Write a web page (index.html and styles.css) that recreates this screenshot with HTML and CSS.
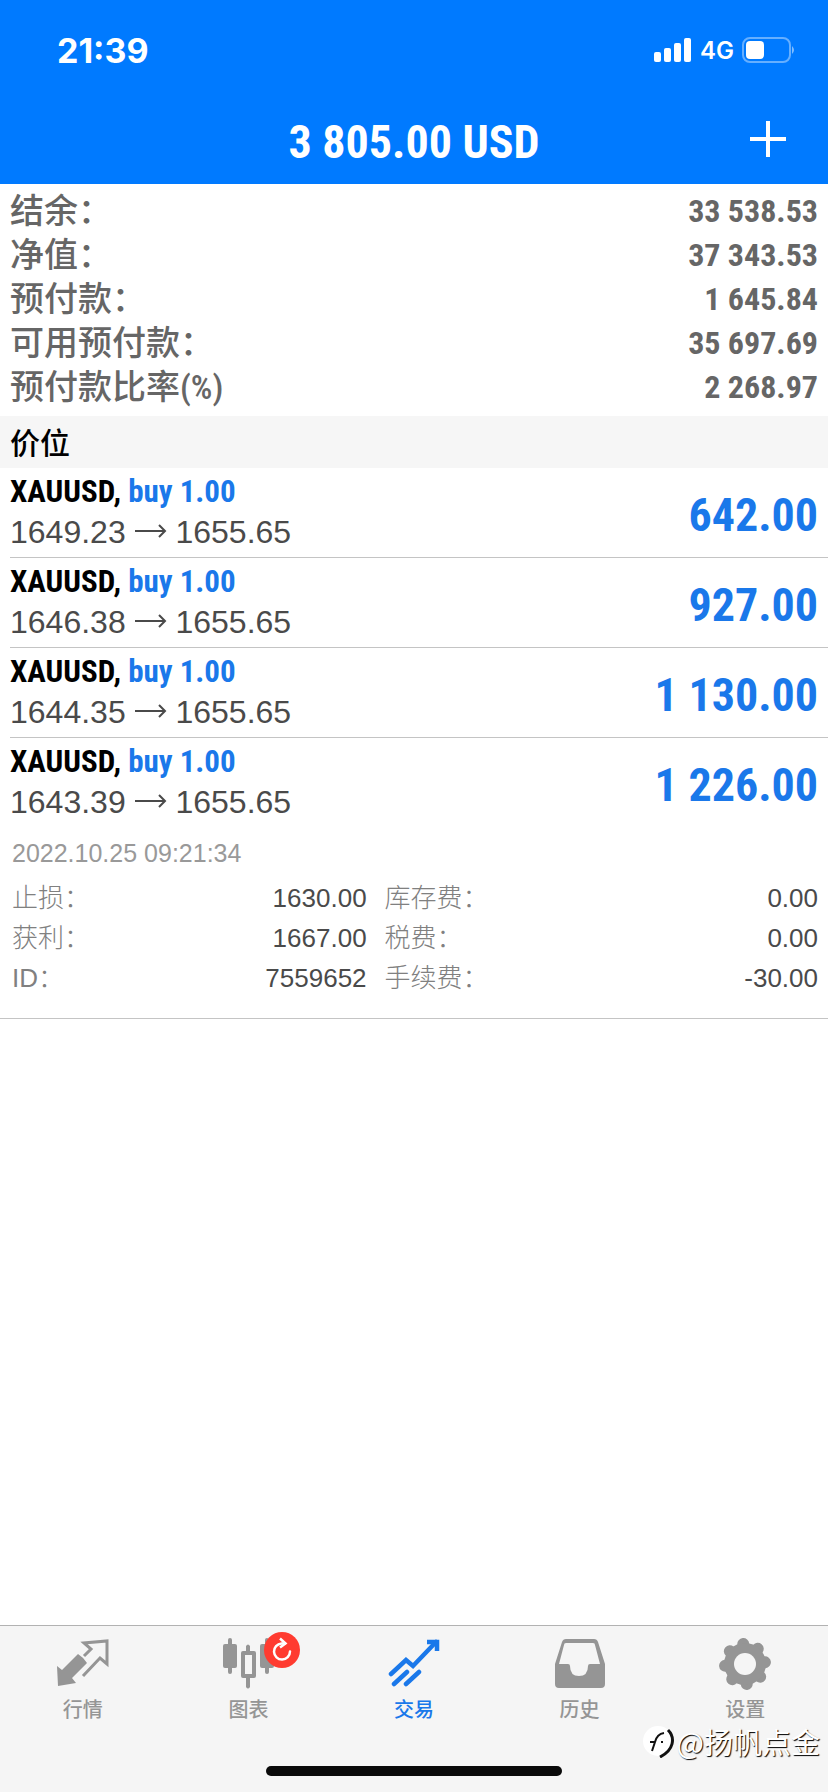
FILE: index.html
```html
<!DOCTYPE html>
<html lang="zh-Hans">
<head>
    <meta charset="UTF-8">
    <meta name="viewport" content="width=device-width, initial-scale=1">
    <title>交易</title>
    <link rel="stylesheet" href="styles.css">
</head>
<body>

<svg width="0" height="0" class="sprite" aria-hidden="true">
    <symbol id="arrow" viewBox="0 0 32 16">
        <path d="M0 8h30M24 2l6 6-6 6" fill="none" stroke="currentColor" stroke-width="2"/>
    </symbol>
</svg>

<header class="header">
    <div class="status-bar">
        <span class="clock">21:39</span>
        <div class="status-icons">
            <svg width="38" height="24" viewBox="0 0 38 24" fill="#fff" aria-hidden="true">
                <rect x="0" y="14" width="7" height="10" rx="2"/>
                <rect x="10" y="10" width="7" height="14" rx="2"/>
                <rect x="20" y="5" width="7" height="19" rx="2"/>
                <rect x="30" y="0" width="7" height="24" rx="2"/>
            </svg>
            <span class="network">4G</span>
            <svg width="54" height="26" viewBox="0 0 54 26" aria-hidden="true">
                <rect x="1" y="1" width="47" height="24" rx="7" fill="none" stroke="#fff" stroke-opacity=".4" stroke-width="2"/>
                <rect x="4" y="4" width="18" height="18" rx="4" fill="#fff"/>
                <path d="M50 9q4 4 0 8z" fill="#fff" fill-opacity=".5"/>
            </svg>
        </div>
    </div>
    <div class="title-bar">
        <h1>3 805.00 USD</h1>
        <button class="add-button" aria-label="新订单">
            <svg width="36" height="36" viewBox="0 0 36 36" stroke="#fff" stroke-width="4" aria-hidden="true">
                <path d="M18 0v36M0 18h36"/>
            </svg>
        </button>
    </div>
</header>

<main>
    <dl class="summary">
        <div><dt>结余：</dt><dd>33 538.53</dd></div>
        <div><dt>净值：</dt><dd>37 343.53</dd></div>
        <div><dt>预付款：</dt><dd>1 645.84</dd></div>
        <div><dt>可用预付款：</dt><dd>35 697.69</dd></div>
        <div><dt>预付款比率(%)</dt><dd>2 268.97</dd></div>
    </dl>

    <h2 class="section-title">价位</h2>

    <ul class="positions">
        <li class="position">
            <div>
                <p class="symbol">XAUUSD, <span class="side">buy 1.00</span></p>
                <p class="prices">1649.23 <svg class="arrow" role="img" aria-label="→"><use href="#arrow"/></svg> 1655.65</p>
            </div>
            <strong class="profit">642.00</strong>
        </li>
        <li class="position">
            <div>
                <p class="symbol">XAUUSD, <span class="side">buy 1.00</span></p>
                <p class="prices">1646.38 <svg class="arrow" role="img" aria-label="→"><use href="#arrow"/></svg> 1655.65</p>
            </div>
            <strong class="profit">927.00</strong>
        </li>
        <li class="position">
            <div>
                <p class="symbol">XAUUSD, <span class="side">buy 1.00</span></p>
                <p class="prices">1644.35 <svg class="arrow" role="img" aria-label="→"><use href="#arrow"/></svg> 1655.65</p>
            </div>
            <strong class="profit">1 130.00</strong>
        </li>
        <li class="position">
            <div>
                <p class="symbol">XAUUSD, <span class="side">buy 1.00</span></p>
                <p class="prices">1643.39 <svg class="arrow" role="img" aria-label="→"><use href="#arrow"/></svg> 1655.65</p>
            </div>
            <strong class="profit">1 226.00</strong>
        </li>
    </ul>

    <!-- 展开的持仓详情 -->
    <section class="details">
        <time datetime="2022-10-25T09:21:34">2022.10.25 09:21:34</time>
        <dl class="details-grid">
            <div><dt>止损：</dt><dd>1630.00</dd></div>
            <div><dt>库存费：</dt><dd>0.00</dd></div>
            <div><dt>获利：</dt><dd>1667.00</dd></div>
            <div><dt>税费：</dt><dd>0.00</dd></div>
            <div><dt>ID：</dt><dd>7559652</dd></div>
            <div><dt>手续费：</dt><dd>-30.00</dd></div>
        </dl>
    </section>
</main>

<footer class="footer">
    <nav class="tabs">
        <a class="tab" href="#quotes">
            <svg width="52" height="52" viewBox="0 0 52 52" aria-hidden="true">
                <path d="M0 28l5 4L21 16q5 3 9 9L15 40l4 5-18 3z" fill="currentColor"/>
                <path d="M27 18l7-7-7-6 23-2v23l-7-6-17 18" fill="none" stroke="currentColor" stroke-width="3"/>
            </svg>
            行情
        </a>
        <a class="tab" href="#charts">
            <svg width="52" height="52" viewBox="0 0 52 52" fill="currentColor" aria-hidden="true">
                <rect x="1" y="6" width="14" height="24" rx="2"/>
                <rect x="6" y="0" width="4" height="36" rx="2"/>
                <path fill-rule="evenodd" d="M21 13h11q2 0 2 2v23q0 2-2 2H21q-2 0-2-2V15q0-2 2-2zm2 4v19h7V17z"/>
                <path d="M24 13V8q2-3 4 0v5zM24 39v10q2 3 4 0V39z"/>
                <rect x="38" y="6" width="14" height="24" rx="2"/>
                <rect x="43" y="0" width="4" height="36" rx="2"/>
            </svg>
            <span class="badge">
                <svg width="36" height="36" viewBox="0 0 36 36" fill="none" stroke="#fff" stroke-width="2.5" aria-hidden="true">
                    <path d="M21 11.5h-3.500a8 8 0 1 0 8.500 8" stroke-linecap="round"/>
                    <path d="M16 6.500l5.500 5-5.500 4"/>
                </svg>
            </span>
            图表
        </a>
        <a class="tab tab-active" href="#trade" aria-current="page">
            <svg width="52" height="52" viewBox="0 0 52 52" fill="none" stroke="currentColor" stroke-width="4.500" stroke-linecap="round" aria-hidden="true">
                <path d="M3 36l15-14 7 6L48 4M6 46l13-12M18 46l13-12"/>
                <path d="M39 4h10v9" stroke-linecap="butt"/>
            </svg>
            交易
        </a>
        <a class="tab" href="#history">
            <svg width="52" height="52" viewBox="0 0 52 52" fill="currentColor" aria-hidden="true">
                <path fill-rule="evenodd" d="M12 1h28q3 0 4 3l7 22v20q0 4-4 4H5q-4 0-4-4V26L8 4q1-3 4-3zm0 4q-2 0-2 2L5 26h9q2 0 2 2 0 10 9 10t9-10q0-2 2-2h10L41 7q0-2-2-2z"/>
            </svg>
            历史
        </a>
        <a class="tab" href="#settings">
            <svg width="52" height="52" viewBox="0 0 52 52" aria-hidden="true">
                <g transform="rotate(-5 26 26)" stroke="currentColor" stroke-width="12" stroke-linecap="round">
                    <path d="M26 6v40M6 26h40M12 12l28 28M12 40l28-28"/>
                </g>
                <circle cx="26" cy="26" r="21" fill="currentColor"/>
                <circle cx="26" cy="26" r="11" fill="#f5f5f5"/>
            </svg>
            设置
        </a>
    </nav>
    <div class="home-indicator"></div>
    <div class="watermark">
        <svg width="34" height="34" viewBox="0 0 34 34" aria-hidden="true">
            <circle cx="15" cy="17" r="15" fill="#fff"/>
            <path d="M9 27l3-9q2-8 9-9M7 18h5M18 18h2" fill="none" stroke="#111" stroke-width="2"/>
            <path d="M25 6q6 6 4 14-2 8-12 13" fill="none" stroke="#111" stroke-width="3"/>
        </svg>
        <span>@扬帆点金</span>
    </div>
</footer>

</body>
</html>
```
FILE: styles.css
```css
* {
    box-sizing: border-box;
}

body {
    margin: 0;
    min-height: 100vh;
    display: flex;
    flex-direction: column;
    font-family: "Liberation Sans", "Noto Sans CJK SC", sans-serif;
    background: #fff;
    color: #4a4a4a;
}

h1, h2, p, dl, dd, ul {
    margin: 0;
    padding: 0;
}

main {
    flex: 1;
}

.sprite {
    position: absolute;
}

/* header */
.header {
    background: #007aff;
    color: #fff;
}

.status-bar {
    display: flex;
    justify-content: space-between;
    align-items: center;
    height: 100px;
    padding: 0 32px 0 57px;
}

.clock {
    font: bold 34px "Inter", sans-serif;
}

.status-icons {
    display: flex;
    align-items: center;
    gap: 8px;
}

.network {
    font: 600 24px "Inter", sans-serif;
}

.title-bar {
    display: grid;
    grid-template-columns: 1fr auto 1fr;
    align-items: center;
    height: 84px;
    padding: 0 42px;
}

.title-bar h1 {
    grid-column: 2;
    font: bold 46px "Liberation Sans Narrow", "Roboto Condensed", "Roboto", sans-serif;
}

.add-button {
    justify-self: end;
    display: flex;
    padding: 0 0 6px;
    border: 0;
    background: none;
    cursor: pointer;
}

/* account summary */
.summary {
    padding: 5px 10px 7px;
    color: #666;
}

.summary div {
    display: flex;
    justify-content: space-between;
    line-height: 44px;
}

.summary dt {
    font-family: "Liberation Sans Narrow", "Roboto Condensed", "Noto Sans CJK SC", sans-serif;
    font-size: 34px;
    font-weight: 500;
}

.summary dd {
    font-family: "Liberation Sans Narrow", "Roboto Condensed", "Roboto", sans-serif;
    font-size: 32px;
    font-weight: bold;
}

.section-title {
    padding: 0 10px 2px;
    background: #f6f6f6;
    color: #000;
    font: 500 30px/50px "Noto Sans CJK SC", sans-serif;
}

/* positions */
.positions {
    list-style: none;
}

.position {
    display: flex;
    justify-content: space-between;
    align-items: center;
    height: 90px;
    margin-left: 10px;
    padding-right: 10px;
    border-bottom: 1px solid #c4c4c4;
}

.position:last-child {
    border-bottom-color: transparent;
}

.symbol {
    font: bold 31px/40px "Liberation Sans Narrow", "Roboto Condensed", "Roboto", sans-serif;
    color: #000;
}

.side, .profit {
    color: #1a78ea;
}

.prices {
    font-size: 32px;
    line-height: 40px;
    padding-bottom: 2px;
}

.arrow {
    width: 32px;
    height: 16px;
    vertical-align: 4px;
}

.profit {
    padding-top: 4px;
    font: bold 46px "Liberation Sans Narrow", "Roboto Condensed", "Roboto", sans-serif;
}

.details {
    padding: 5px 10px 20px 12px;
    border-bottom: 1px solid #c4c4c4;
    font-size: 26px;
    line-height: 40px;
}

.details time {
    display: block;
    margin-bottom: 5px;
    color: #999;
    font-size: 25px;
}

.details-grid {
    display: grid;
    grid-template-columns: 9fr 11fr;
    column-gap: 18px;
}

.details-grid div {
    display: flex;
    justify-content: space-between;
}

.details-grid dt {
    color: #808080;
    font-weight: 300;
}

/* tab bar */
.footer {
    position: relative;
    border-top: 1px solid #b2b2b2;
    background: #f5f5f5;
}

.tabs {
    display: grid;
    grid-template-columns: repeat(5, 1fr);
    padding-top: 12px;
}

.tab {
    position: relative;
    display: flex;
    flex-direction: column;
    align-items: center;
    gap: 4px;
    color: #959595;
    font: 500 20px/30px "Noto Sans CJK SC", sans-serif;
    text-decoration: none;
}

.tab-active {
    color: #1a78ea;
}

.badge {
    position: absolute;
    top: -6px;
    left: calc(50% + 16px);
    width: 36px;
    height: 36px;
    border-radius: 50%;
    background: #ff3b30;
}

.badge svg {
    display: block;
}

.home-indicator {
    width: 296px;
    height: 10px;
    margin: 42px auto 16px;
    border-radius: 5px;
    background: #0a0a0a;
}

.watermark {
    position: absolute;
    right: 8px;
    bottom: 31px;
    display: flex;
    align-items: center;
    color: #fff;
    font: 29px/40px "Noto Sans CJK SC", sans-serif;
    text-shadow: 1px 1px 1px #000;
}
```
